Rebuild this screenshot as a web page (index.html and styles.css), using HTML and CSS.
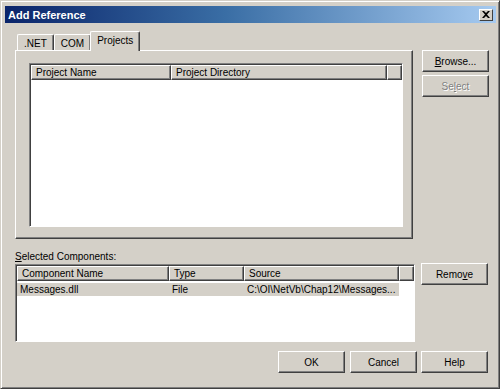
FILE: index.html
```html
<!DOCTYPE html>
<html lang="en">
<head>
  <meta charset="UTF-8">
  <title>Add Reference</title>
  <link rel="stylesheet" href="styles.css">
</head>
<body>
  <div class="window">
    <div class="titlebar">
      <span class="title">Add Reference</span>
      <span class="close-btn">
        <svg width="8" height="7" viewBox="0 0 8 7"><path d="M0 0h2l2 2 2-2h2L5 3.5 8 7H6L4 5 2 7H0l3-3.5z" fill="#000"/></svg>
      </span>
    </div>

    <div class="content">
      <!-- tabs + right buttons -->
      <div class="top-row">
        <div class="tabs-area">
          <div class="tab-strip">
            <div class="tab">.NET</div>
            <div class="tab">COM</div>
            <div class="tab active">Projects</div>
          </div>
          <div class="tab-panel">
            <div class="listview projects">
              <div class="lv-header">
                <div class="col-head" style="width:140px">Project Name</div>
                <div class="col-head" style="width:216px">Project Directory</div>
                <div class="col-head filler"></div>
              </div>
            </div>
          </div>
        </div>
        <div class="side">
          <button class="btn"><u>B</u>rowse...</button>
          <button class="btn disabled">Se<u>l</u>ect</button>
        </div>
      </div>

      <!-- selected components -->
      <div class="label"><u>S</u>elected Components:</div>
      <div class="mid-row">
        <div class="listview selected">
          <div class="lv-header">
            <div class="col-head" style="width:152px">Component Name</div>
            <div class="col-head" style="width:75px">Type</div>
            <div class="col-head" style="width:155px">Source</div>
            <div class="col-head filler"></div>
          </div>
          <div class="lv-row">
            <div class="cell" style="width:152px">Messages.dll</div>
            <div class="cell" style="width:75px">File</div>
            <div class="cell" style="width:155px">C:\OI\NetVb\Chap12\Messages...</div>
          </div>
        </div>
        <div class="side">
          <button class="btn">Remo<u>v</u>e</button>
        </div>
      </div>

      <div class="bottom-row">
        <button class="btn">OK</button>
        <button class="btn">Cancel</button>
        <button class="btn">Help</button>
      </div>
    </div>
  </div>
</body>
</html>
```

FILE: styles.css
```css
body {
  margin: 0;
  background: #d4d0c8;
  font-family: "Liberation Sans", Arial, sans-serif;
  font-size: 10px;
  color: #000;
}
.window {
  width: 500px;
  height: 389px;
  box-sizing: border-box;
  background: #d4d0c8;
  border: 1px solid;
  border-color: #d4d0c8 #404040 #404040 #d4d0c8;
  box-shadow: inset 1px 1px #fff, inset -1px -1px #808080;
  padding: 4px 3px 0 4px;
}
.titlebar {
  height: 17px;
  margin-top: 1px;
  background: linear-gradient(90deg, #0a246a 0%, #3a6ea5 45%, #a6caf0 100%);
  display: flex;
  align-items: center;
  justify-content: space-between;
  padding: 0 3px 0 3px;
}
.title {
  color: #fff;
  font-weight: bold;
  font-size: 11px;
}
.close-btn {
  width: 14px;
  height: 12px;
  box-sizing: border-box;
  background: #d4d0c8;
  border: 1px solid;
  border-color: #fff #404040 #404040 #fff;
  display: flex;
  align-items: center;
  justify-content: center;
}
.content {
  padding: 9px 0 0 10px;
}
.top-row, .mid-row {
  display: flex;
}
.tabs-area {
  width: 398px;
}
.tab-strip {
  display: flex;
  align-items: flex-end;
  height: 18px;
  padding-left: 2px;
}
.tab {
  height: 16px;
  box-sizing: border-box;
  padding: 3px 6px 0 6px;
  border: 1px solid;
  border-bottom: none;
  border-color: #fff #404040 #fff #fff;
  box-shadow: inset -1px 0 #808080;
  border-radius: 2px 2px 0 0;
}
.tab.active {
  height: 20px;
  margin-bottom: -1px;
  margin-left: -1px;
  padding: 3px 6px 0 6px;
  background: #d4d0c8;
  position: relative;
  z-index: 1;
}
.tab-panel {
  height: 189px;
  box-sizing: border-box;
  border: 1px solid;
  border-color: #fff #404040 #404040 #fff;
  box-shadow: inset -1px -1px #808080;
  padding: 12px 0 0 13px;
}
.listview {
  background: #fff;
  box-sizing: border-box;
  border: 1px solid;
  border-color: #808080 #fff #fff #808080;
  box-shadow: inset 1px 1px #404040;
  padding: 1px 0 0 1px;
  overflow: hidden;
}
.listview.projects {
  width: 374px;
  height: 164px;
}
.listview.selected {
  width: 400px;
  height: 78px;
}
.lv-header {
  display: flex;
  height: 15px;
}
.col-head {
  box-sizing: border-box;
  background: #d4d0c8;
  border: 1px solid;
  border-color: #fff #404040 #404040 #fff;
  box-shadow: inset -1px -1px #808080;
  padding: 1px 0 0 4px;
  line-height: 12px;
  white-space: nowrap;
  flex-shrink: 0;
}
.col-head.filler {
  flex: 1;
}
.lv-row {
  display: flex;
  margin-top: 2px;
  height: 13px;
  line-height: 13px;
}
.cell {
  background: #d4d0c8;
  padding-left: 3px;
  box-sizing: border-box;
  white-space: nowrap;
}
.side {
  display: flex;
  flex-direction: column;
  gap: 3px;
  margin-left: 9px;
}
.top-row .side {
  padding-top: 18px;
}
.btn {
  width: 67px;
  height: 22px;
  box-sizing: border-box;
  background: #d4d0c8;
  font-family: inherit;
  font-size: 10px;
  color: #000;
  border: 1px solid;
  border-color: #fff #404040 #404040 #fff;
  box-shadow: inset -1px -1px #808080;
  padding: 0;
}
.btn.disabled {
  color: #808080;
  text-shadow: 1px 1px #fff;
}
.label {
  margin-top: 10px;
  height: 15px;
  line-height: 15px;
}
.mid-row .side {
  margin-top: -1px;
  margin-left: 6px;
}
.bottom-row {
  display: flex;
  justify-content: flex-end;
  gap: 5px;
  margin-top: 9px;
  padding-right: 8px;
}
.bottom-row .btn:last-child {
  margin-left: -1px;
}
```
